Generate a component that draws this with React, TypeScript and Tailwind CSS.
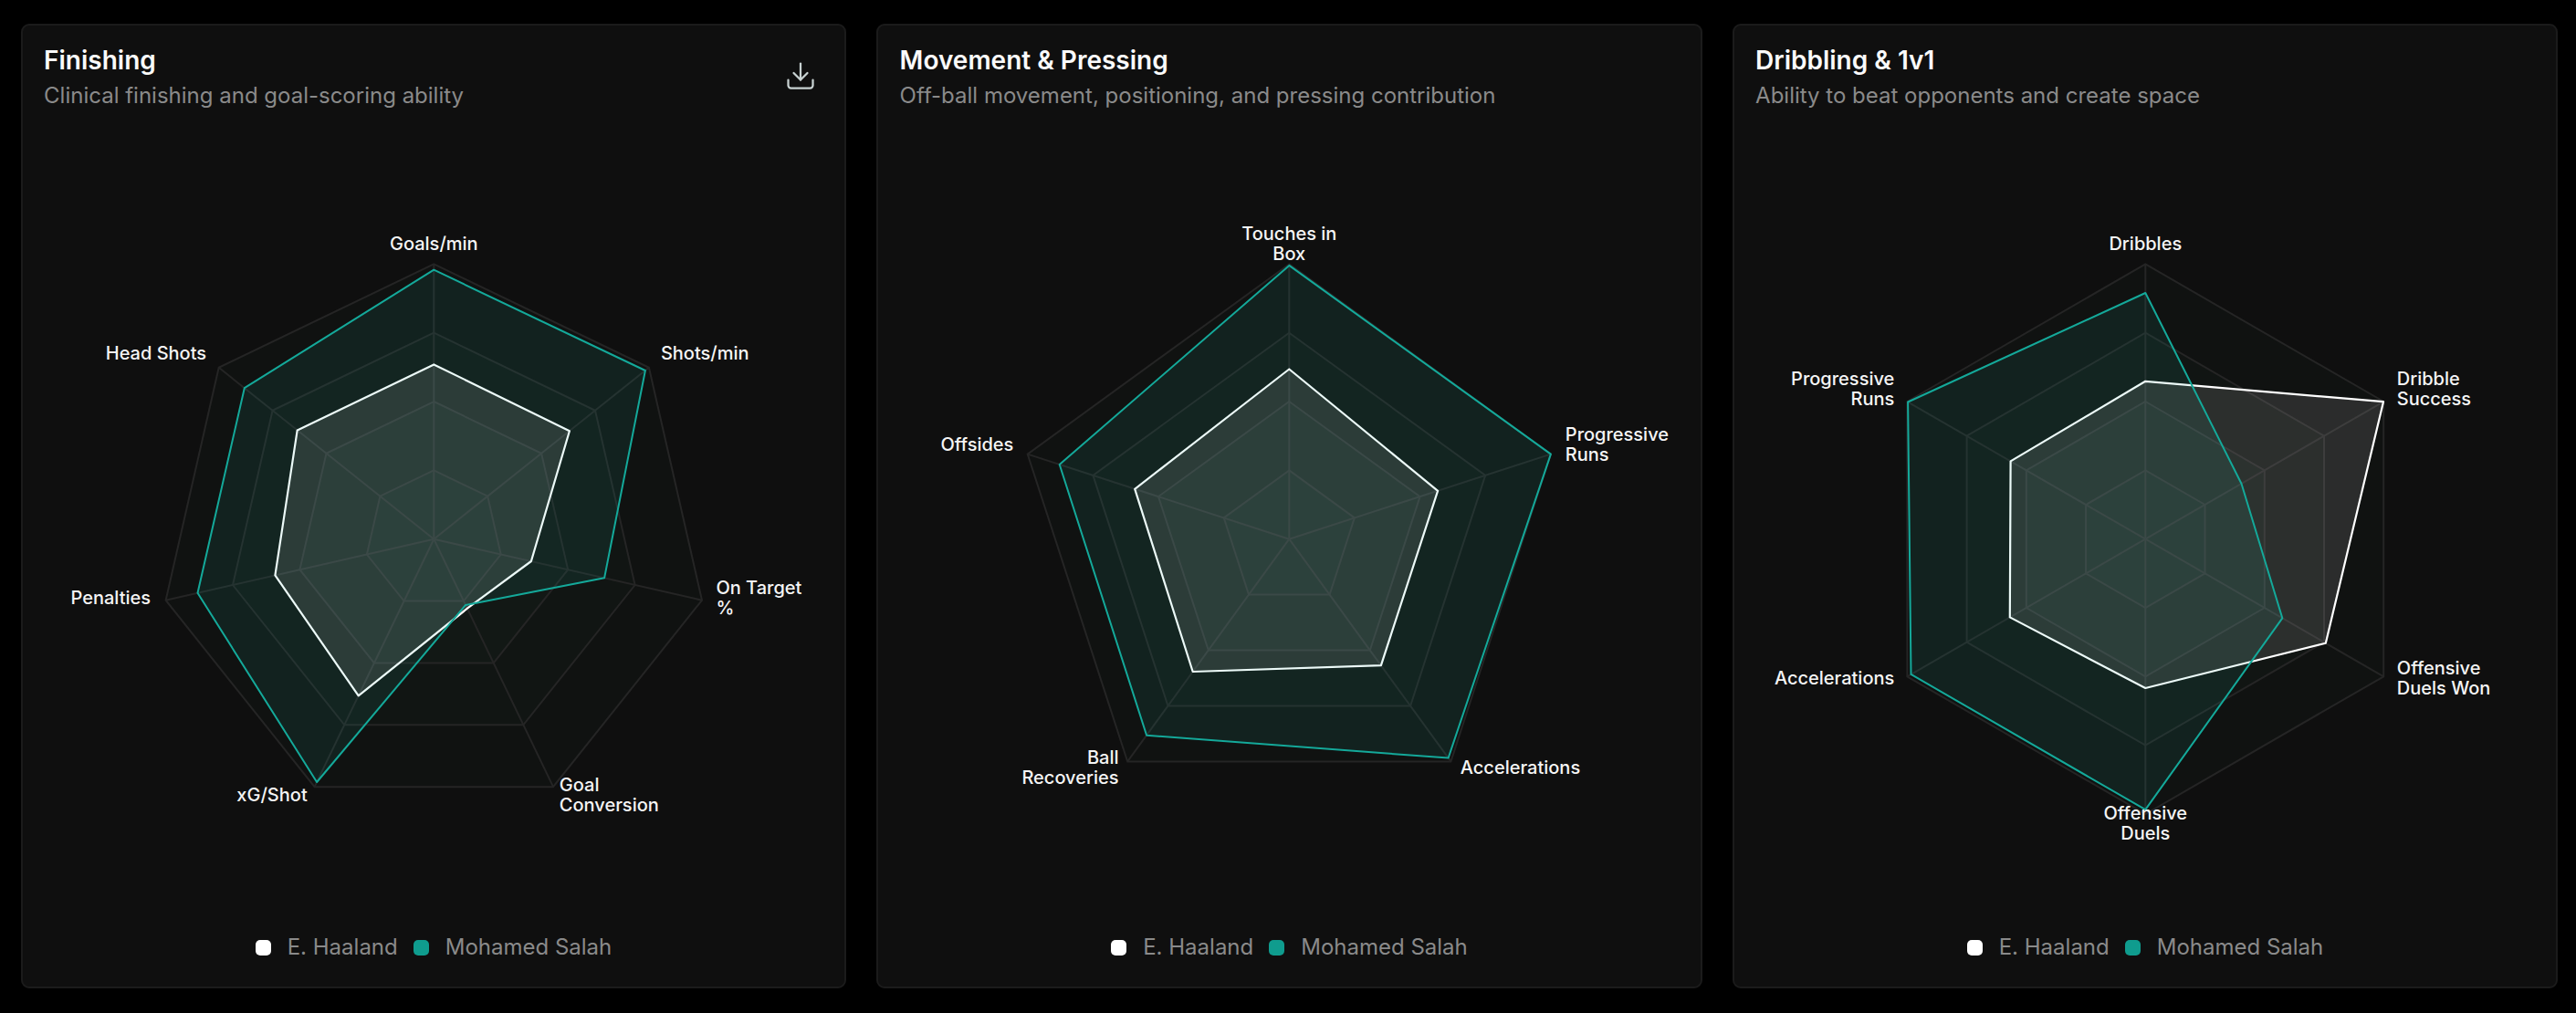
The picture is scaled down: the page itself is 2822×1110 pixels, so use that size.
import { Download } from "lucide-react";

type Label = { lines: string[]; dx: number; y: number; anchor: "start" | "middle" | "end" };
type Chart = {
  title: string;
  subtitle: string;
  white: number[];
  teal: number[];
  labels: Label[];
  download?: boolean;
};

const CX = 450.3;
const CY = 450.7;
const R = 301.3;
const TOP = 140;

const charts: Chart[] = [
  {
    title: "Finishing",
    subtitle: "Clinical finishing and goal-scoring ability",
    download: true,
    white: [0.635, 0.631, 0.363, 0.28, 0.632, 0.592, 0.635],
    teal: [0.979, 0.983, 0.636, 0.266, 0.981, 0.881, 0.881],
    labels: [
      { lines: ["Goals/min"], dx: 0, y: 274, anchor: "middle" },
      { lines: ["Shots/min"], dx: 248.6, y: 394, anchor: "start" },
      { lines: ["On Target", "%"], dx: 309.1, y: 651.3, anchor: "start" },
      { lines: ["Goal", "Conversion"], dx: 137.5, y: 867, anchor: "start" },
      { lines: ["xG/Shot"], dx: -138.6, y: 878, anchor: "end" },
      { lines: ["Penalties"], dx: -310.3, y: 662, anchor: "end" },
      { lines: ["Head Shots"], dx: -249.2, y: 394, anchor: "end" },
    ],
  },
  {
    title: "Movement & Pressing",
    subtitle: "Off-ball movement, positioning, and pressing contribution",
    white: [0.618, 0.568, 0.568, 0.596, 0.59],
    teal: [0.995, 1, 0.984, 0.882, 0.878],
    labels: [
      { lines: ["Touches in", "Box"], dx: 0, y: 263, anchor: "middle" },
      { lines: ["Progressive", "Runs"], dx: 302.5, y: 483, anchor: "start" },
      { lines: ["Accelerations"], dx: 187.5, y: 848, anchor: "start" },
      { lines: ["Ball", "Recoveries"], dx: -186.8, y: 837.3, anchor: "end" },
      { lines: ["Offsides"], dx: -301.9, y: 494, anchor: "end" },
    ],
  },
  {
    title: "Dribbling & 1v1",
    subtitle: "Ability to beat opponents and create space",
    white: [0.574, 0.999, 0.757, 0.542, 0.569, 0.566],
    teal: [0.895, 0.403, 0.575, 0.984, 0.984, 0.997],
    labels: [
      { lines: ["Dribbles"], dx: 0, y: 274, anchor: "middle" },
      { lines: ["Dribble", "Success"], dx: 275.5, y: 422.3, anchor: "start" },
      { lines: ["Offensive", "Duels Won"], dx: 275.5, y: 739, anchor: "start" },
      { lines: ["Offensive", "Duels"], dx: 0, y: 898, anchor: "middle" },
      { lines: ["Accelerations"], dx: -275, y: 749.6, anchor: "end" },
      { lines: ["Progressive", "Runs"], dx: -275, y: 422.3, anchor: "end" },
    ],
  },
];

function pts(values: number[]) {
  const n = values.length;
  return values
    .map((v, i) => {
      const a = (i * 2 * Math.PI) / n;
      return `${(CX + R * v * Math.sin(a)).toFixed(1)},${(CY - R * v * Math.cos(a)).toFixed(1)}`;
    })
    .join(" ");
}

function Radar({ chart }: { chart: Chart }) {
  const n = chart.white.length;
  const rings = [1, 0.75, 0.5, 0.25];
  return (
    <svg className="block h-[860px] w-full shrink-0" fill="none">
      {rings.map((r) => (
        <polygon
          key={r}
          points={pts(Array(n).fill(r))}
          fill="#6ee7d8"
          fillOpacity={0.015}
          stroke="#252525"
          strokeWidth={2}
        />
      ))}
      {chart.white.map((_, i) => {
        const a = (i * 2 * Math.PI) / n;
        return (
          <line
            key={i}
            x1={CX}
            y1={CY}
            x2={CX + R * Math.sin(a)}
            y2={CY - R * Math.cos(a)}
            stroke="#252525"
            strokeWidth={2}
          />
        );
      })}
      <polygon
        points={pts(chart.white)}
        fill="#ffffff"
        fillOpacity={0.115}
        stroke="#ffffff"
        strokeWidth={2.2}
        strokeLinejoin="round"
      />
      <polygon
        points={pts(chart.teal)}
        fill="#2fc4b4"
        fillOpacity={0.09}
        stroke="#14a99a"
        strokeWidth={2}
        strokeLinejoin="round"
      />
      {chart.labels.map((l) => (
        <text
          key={l.lines.join()}
          x={CX + l.dx}
          y={l.y - TOP}
          textAnchor={l.anchor}
          className="fill-[#f5f5f5] text-[20px] font-[450]"
        >
          {l.lines.map((line, i) => (
            <tspan key={line} x={CX + l.dx} dy={i === 0 ? 0 : 21.8}>
              {line}
            </tspan>
          ))}
        </text>
      ))}
    </svg>
  );
}

function Card({ chart }: { chart: Chart }) {
  return (
    <section className="flex h-[1057px] flex-col rounded-[9px] border-2 border-[#1b1b1b] bg-[#0f0f0f]">
      <header className="flex h-[112px] shrink-0 items-start justify-between pl-[23.4px] pr-[30px] pt-[20px]">
        <div>
          <h2 className="text-[28px] font-semibold leading-[36px] text-[#fafafa]">{chart.title}</h2>
          <p className="mt-[3px] text-[24px] leading-[36px] text-[#8a8a8a]">{chart.subtitle}</p>
        </div>
        {chart.download && <Download size={36} strokeWidth={1.5} className="mt-[17px] text-[#c8d2d2]" />}
      </header>
      <Radar chart={chart} />
      <div className="flex flex-1 items-start justify-center gap-[17px] pt-[20px] text-[24px] leading-[36px] text-[#8a8a8a]">
        <div className="flex items-center gap-[18px]">
          <span className="size-[17px] rounded-[5px] bg-white" />
          E. Haaland
        </div>
        <div className="flex items-center gap-[18px]">
          <span className="size-[17px] rounded-[5px] bg-[#0f9c8e]" />
          Mohamed Salah
        </div>
      </div>
    </section>
  );
}

export default function App() {
  return (
    <main className="grid min-h-screen grid-cols-3 items-start gap-[32.9px] bg-black pl-[22.7px] pr-[19.7px] pt-[26px] font-[family-name:Inter,sans-serif]">
      {charts.map((c) => (
        <Card key={c.title} chart={c} />
      ))}
    </main>
  );
}
